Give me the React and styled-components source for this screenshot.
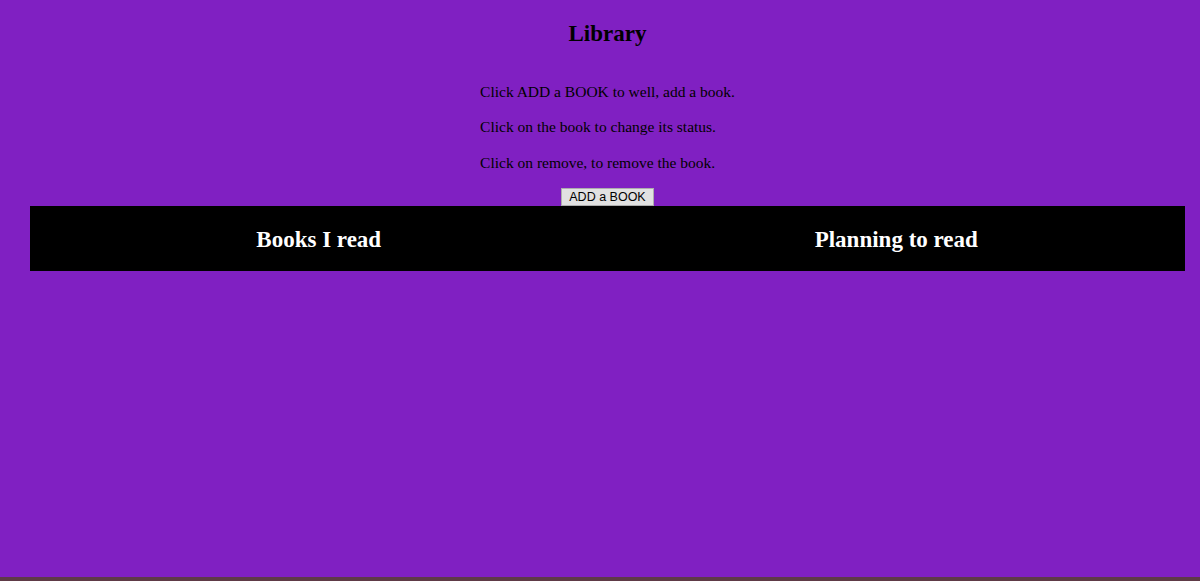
import React from "react";
import styled, { createGlobalStyle } from "styled-components";

const COLORS = {
  purple: "#8020c2",
  black: "#000000",
  white: "#ffffff",
  strip: "#5e3a46",
  buttonFace: "#e1e1e1",
  buttonEdge: "#adadad",
};

const GlobalStyle = createGlobalStyle`
  html, body {
    margin: 0;
    padding: 0;
    background: ${COLORS.purple};
  }

  body {
    font-family: "Liberation Serif", "Times New Roman", serif;
    color: ${COLORS.black};
  }
`;

const Page = styled.div`
  min-height: 577px;
  display: flex;
  flex-direction: column;
  padding-left: 15px;
  border-bottom: 4px solid ${COLORS.strip};
`;

const Title = styled.h1`
  margin: 20px 0 0;
  font-size: 23px;
  line-height: 27px;
  text-align: center;
`;

const Instructions = styled.div`
  align-self: center;
  margin-top: 35.5px;
`;

const Line = styled.p`
  margin: 0 0 17.5px;
  font-size: 15.5px;
  line-height: 18px;
`;

const AddButton = styled.button`
  align-self: center;
  margin-top: -1px;
  padding: 1px 7px;
  height: 18px;
  font-family: "Liberation Sans", Arial, sans-serif;
  font-size: 12.5px;
  line-height: 14px;
  color: ${COLORS.black};
  background: ${COLORS.buttonFace};
  border: 1px solid ${COLORS.buttonEdge};
  border-radius: 0;
`;

const Shelves = styled.div`
  display: grid;
  grid-template-columns: 1fr 1fr;
  margin: 0 15px;
  height: 65px;
  background: ${COLORS.black};
`;

const ShelfTitle = styled.h2`
  margin: 0;
  align-self: center;
  text-align: center;
  font-size: 23px;
  color: ${COLORS.white};
  transform: translateY(1px);
`;

const App = () => {
  return (
    <>
      <GlobalStyle />
      <Page>
        <Title>Library</Title>
        <Instructions>
          <Line>Click ADD a BOOK to well, add a book.</Line>
          <Line>Click on the book to change its status.</Line>
          <Line>Click on remove, to remove the book.</Line>
        </Instructions>
        <AddButton>ADD a BOOK</AddButton>
        <Shelves>
          <ShelfTitle>Books I read</ShelfTitle>
          <ShelfTitle>Planning to read</ShelfTitle>
        </Shelves>
      </Page>
    </>
  );
};

export default App;
